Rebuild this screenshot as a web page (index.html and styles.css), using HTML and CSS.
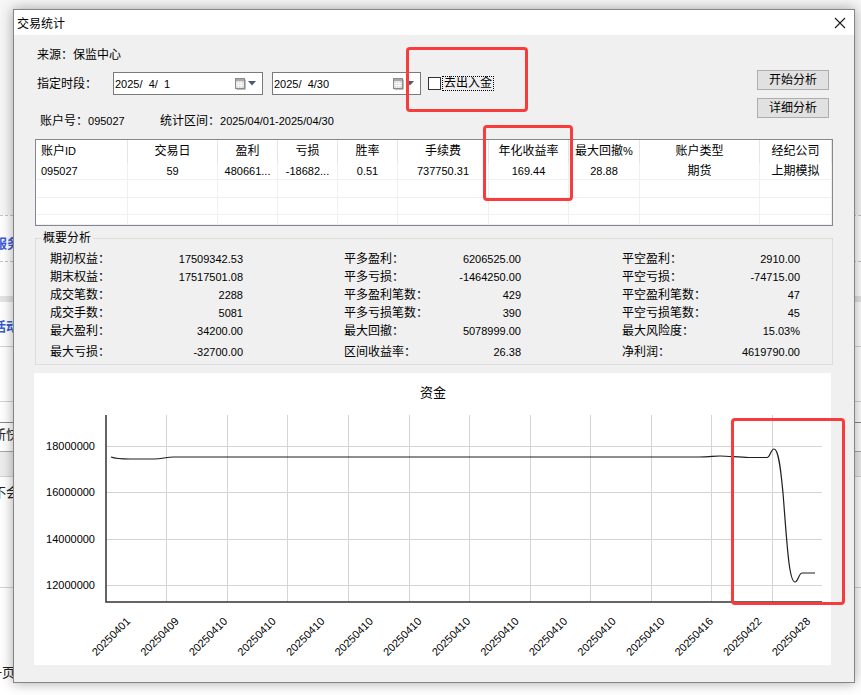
FILE: index.html
```html
<!DOCTYPE html>
<html lang="zh-CN">
<head>
<meta charset="utf-8">
<title>交易统计</title>
<link rel="stylesheet" href="styles.css">
</head>
<body>
<div class="desk">
  <div class="bgapp">
    <div class="b-top"></div>
    <div class="b-dash"></div>
    <div class="b-row b-serv"><span class="bt blue ind6">服务</span></div>
    <div class="b-dash"></div>
    <div class="b-row b-w1"></div>
    <div class="b-row b-gray"></div>
    <div class="b-row b-act"><span class="bt blue ind7">活动</span></div>
    <div class="b-line"></div>
    <div class="b-row b-w2"></div>
    <div class="b-line"></div>
    <div class="b-row b-w3"></div>
    <div class="b-line dark"></div>
    <div class="b-row b-new"><span class="bt ind7">新快</span></div>
    <div class="b-line mid"></div>
    <div class="b-row b-band"></div>
    <div class="b-line"></div>
    <div class="b-row b-meet"><span class="bt ind7">不会</span></div>
    <div class="b-line"></div>
    <div class="b-row b-last"><span class="bt ind11">一页</span></div>
  </div>

  <div class="win">
    <div class="titlebar">
      <span class="title">交易统计</span>
      <svg class="close" width="12" height="12" viewBox="0 0 12 12"><path d="M1 1 L11 11 M11 1 L1 11" stroke="#1a1a1a" stroke-width="1.1" fill="none"/></svg>
    </div>
    <div class="content">
      <div class="top">
        <div class="top-left">
          <div class="line1">来源：保监中心</div>
          <div class="line2">
            <span class="plbl">指定时段：</span>
            <div class="dp dp1"><span class="dtxt">2025/  4/  1</span>
              <svg class="cal" width="11" height="12" viewBox="0 0 11 12"><rect x="1.5" y="1.5" width="9" height="10" fill="#7d7d7d"/><rect x="0.5" y="0.5" width="9" height="10" fill="#dcdcdc" stroke="#8c8c8c"/><rect x="1" y="1" width="8" height="2" fill="#a9a9a9"/><path d="M1 5.5 H9 M1 7.5 H9 M3.5 3 V10 M6 3 V10" stroke="#ffffff" stroke-width="0.8"/></svg>
              <svg class="tri" width="8" height="5" viewBox="0 0 8 5"><polygon points="0,0 8,0 4,4.5" fill="#4f5a78"/></svg>
            </div>
            <div class="dp dp2"><span class="dtxt">2025/  4/30</span>
              <svg class="cal" width="11" height="12" viewBox="0 0 11 12"><rect x="1.5" y="1.5" width="9" height="10" fill="#7d7d7d"/><rect x="0.5" y="0.5" width="9" height="10" fill="#dcdcdc" stroke="#8c8c8c"/><rect x="1" y="1" width="8" height="2" fill="#a9a9a9"/><path d="M1 5.5 H9 M1 7.5 H9 M3.5 3 V10 M6 3 V10" stroke="#ffffff" stroke-width="0.8"/></svg>
              <svg class="tri" width="8" height="5" viewBox="0 0 8 5"><polygon points="0,0 8,0 4,4.5" fill="#4f5a78"/></svg>
            </div>
            <span class="chk"></span><span class="chklbl">去出入金</span>
          </div>
          <div class="line3"><span class="acct">账户号：<span class="n">095027</span></span><span>统计区间：<span class="n">2025/04/01-2025/04/30</span></span></div>
        </div>
        <div class="top-right">
          <div class="btn">开始分析</div>
          <div class="btn">详细分析</div>
        </div>
      </div>

      <div class="table">
        <div class="th left">账户<span class="lat">ID</span></div>
        <div class="th">交易日</div>
        <div class="th">盈利</div>
        <div class="th">亏损</div>
        <div class="th">胜率</div>
        <div class="th">手续费</div>
        <div class="th">年化收益率</div>
        <div class="th">最大回撤<span class="lat">%</span></div>
        <div class="th">账户类型</div>
        <div class="th">经纪公司</div>

        <div class="td left n">095027</div>
        <div class="td n">59</div>
        <div class="td n">480661...</div>
        <div class="td n">-18682...</div>
        <div class="td n">0.51</div>
        <div class="td n">737750.31</div>
        <div class="td n">169.44</div>
        <div class="td n">28.88</div>
        <div class="td">期货</div>
        <div class="td">上期模拟</div>

        <div class="td"></div><div class="td"></div><div class="td"></div><div class="td"></div><div class="td"></div><div class="td"></div><div class="td"></div><div class="td"></div><div class="td"></div><div class="td"></div>
        <div class="td"></div><div class="td"></div><div class="td"></div><div class="td"></div><div class="td"></div><div class="td"></div><div class="td"></div><div class="td"></div><div class="td"></div><div class="td"></div>
        <div class="td"></div><div class="td"></div><div class="td"></div><div class="td"></div><div class="td"></div><div class="td"></div><div class="td"></div><div class="td"></div><div class="td"></div><div class="td"></div>
      </div>

      <fieldset class="summary">
        <legend>概要分析</legend>
        <div class="sgrid">
          <div class="it"><span>期初权益：</span><span class="n">17509342.53</span></div>
          <div class="it"><span>平多盈利：</span><span class="n">6206525.00</span></div>
          <div class="it"><span>平空盈利：</span><span class="n">2910.00</span></div>
          <div class="it"><span>期末权益：</span><span class="n">17517501.08</span></div>
          <div class="it"><span>平多亏损：</span><span class="n">-1464250.00</span></div>
          <div class="it"><span>平空亏损：</span><span class="n">-74715.00</span></div>
          <div class="it"><span>成交笔数：</span><span class="n">2288</span></div>
          <div class="it"><span>平多盈利笔数：</span><span class="n">429</span></div>
          <div class="it"><span>平空盈利笔数：</span><span class="n">47</span></div>
          <div class="it"><span>成交手数：</span><span class="n">5081</span></div>
          <div class="it"><span>平多亏损笔数：</span><span class="n">390</span></div>
          <div class="it"><span>平空亏损笔数：</span><span class="n">45</span></div>
          <div class="it"><span>最大盈利：</span><span class="n">34200.00</span></div>
          <div class="it"><span>最大回撤：</span><span class="n">5078999.00</span></div>
          <div class="it"><span>最大风险度：</span><span class="n">15.03%</span></div>
          <div class="it"><span>最大亏损：</span><span class="n">-32700.00</span></div>
          <div class="it"><span>区间收益率：</span><span class="n">26.38</span></div>
          <div class="it"><span>净利润：</span><span class="n">4619790.00</span></div>
        </div>
      </fieldset>

      <div class="chart">
        <svg width="797" height="292" viewBox="0 0 797 292">
          <text x="399" y="24" class="ctitle" text-anchor="middle">资金</text>
          <g stroke="#d4d4d4" stroke-width="1" fill="none">
            <path d="M72 73.5 H788 M72 119.5 H788 M72 166.5 H788 M72 212.5 H788"/>
            <path d="M132.5 42 V229 M193.5 42 V229 M253.5 42 V229 M314.5 42 V229 M375.5 42 V229 M435.5 42 V229 M496.5 42 V229 M556.5 42 V229 M617.5 42 V229 M677.5 42 V229 M738.5 42 V229"/>
          </g>
          <path d="M72 42 V229 H788" stroke="#333" stroke-width="1.5" fill="none"/>
          <g class="ylab" text-anchor="end">
            <text x="61" y="77">18000000</text>
            <text x="61" y="123">16000000</text>
            <text x="61" y="170">14000000</text>
            <text x="61" y="216">12000000</text>
          </g>
          <path d="M77 84 C82 86 88 86 96 86 L120 86 C128 86 132 84 140 84 L665 84 C675 84 680 83 686 83 C695 83 705 84.5 715 84.5 L733 84.5 C736 84.5 737 76 740 76 C745 76 747 100 749 120 C751 145 753 175 755 190 C757 205 759 209 761 209 C764 209 765 200 768 200 L781 200" stroke="#1e1e1e" stroke-width="1.2" fill="none"/>
          <g class="xlab" text-anchor="end">
            <text transform="translate(97 249) rotate(-45)">20250401</text>
            <text transform="translate(145.6 249) rotate(-45)">20250409</text>
            <text transform="translate(194.1 249) rotate(-45)">20250410</text>
            <text transform="translate(242.7 249) rotate(-45)">20250410</text>
            <text transform="translate(291.3 249) rotate(-45)">20250410</text>
            <text transform="translate(339.9 249) rotate(-45)">20250410</text>
            <text transform="translate(388.4 249) rotate(-45)">20250410</text>
            <text transform="translate(437 249) rotate(-45)">20250410</text>
            <text transform="translate(485.6 249) rotate(-45)">20250410</text>
            <text transform="translate(534.1 249) rotate(-45)">20250410</text>
            <text transform="translate(582.7 249) rotate(-45)">20250410</text>
            <text transform="translate(631.3 249) rotate(-45)">20250410</text>
            <text transform="translate(679.9 249) rotate(-45)">20250416</text>
            <text transform="translate(728.4 249) rotate(-45)">20250422</text>
            <text transform="translate(777 249) rotate(-45)">20250428</text>
          </g>
        </svg>
      </div>
    </div>
  </div>

  <div class="mark m1"></div>
  <div class="mark m2"></div>
  <div class="mark m3"></div>
</div>
</body>
</html>
```

FILE: styles.css
```css
* { box-sizing: border-box; }
html, body { margin: 0; padding: 0; }
body {
  font-family: "Liberation Sans", "Noto Sans CJK SC", sans-serif;
  font-size: 12px;
  color: #000;
  background: #f4f4f4;
}
.desk {
  position: relative;
  width: 861px;
  height: 695px;
  overflow: hidden;
}

/* background application behind the dialog */
.bgapp {
  display: flex;
  flex-direction: column;
  width: 861px;
  height: 695px;
  background: #ffffff;
}
.b-top { height: 215px; background: #f6f6f6; flex: none; }
.b-dash { height: 1px; border-top: 1px dashed #c4c4c4; flex: none; }
.b-line { height: 1px; background: #d4d4d4; flex: none; }
.b-line.dark { background: #8a8a8a; }
.b-line.mid { background: #a8a8a8; }
.b-row { flex: none; background: #fff; overflow: hidden; }
.bt {
  display: block;
  font-family: "Noto Sans CJK SC", sans-serif;
  font-size: 13px;
  line-height: 14px;
  color: #222;
  white-space: nowrap;
}
.bt.blue { color: #3b5bd5; font-weight: bold; }
.ind6 { text-indent: -6px; }
.ind7 { text-indent: -7px; }
.ind11 { text-indent: -11px; }
.b-serv { height: 45px; padding-top: 20px; }
.b-w1 { height: 34px; }
.b-gray { height: 6px; background: #e4e4e4; }
.b-act { height: 44px; padding-top: 17px; }
.b-w2 { height: 54px; }
.b-w3 { height: 20px; }
.b-new { height: 28px; padding-top: 4px; }
.b-band { height: 24px; background: #ededed; }
.b-meet { height: 110px; padding-top: 8px; }
.b-last { height: 107px; padding-top: 77px; }

/* dialog window */
.win {
  position: absolute;
  left: 13px;
  top: 9px;
  width: 842px;
  height: 674px;
  border: 1px solid #858585;
  background: #f0f0f0;
  box-shadow: 0 0 12px rgba(0, 0, 0, 0.35);
  overflow: hidden;
}
.titlebar {
  height: 25px;
  background: #fff;
  display: flex;
  align-items: center;
  justify-content: space-between;
  padding: 0 8px 0 3px;
}
.title {
  font-family: "Noto Sans CJK SC", sans-serif;
  font-size: 12px;
  line-height: 14px;
  padding-top: 1px;
}
.close { display: block; margin-top: 1px; }

.content {
  padding: 0 20px;
}
.top {
  display: flex;
  align-items: flex-start;
}
.top-left {
  padding-top: 12px;
  padding-left: 3px;
}
.line1 { height: 16px; line-height: 16px; }
.line2 {
  margin-top: 9px;
  height: 23px;
  display: flex;
  align-items: center;
}
.plbl { width: 76px; flex: none; line-height: 16px; }
.dp {
  height: 23px;
  border: 1px solid #7a7a7a;
  background: #fff;
  display: flex;
  align-items: center;
  padding: 0 6px 0 1px;
  flex: none;
}
.dp1 { width: 150px; }
.dp2 { width: 149px; margin-left: 9px; }
.dtxt {
  white-space: pre;
  font-size: 11px;
  flex: 1;
  padding-top: 1px;
}
.cal { display: block; margin-right: 2px; }
.tri { display: block; }
.chk {
  width: 13px;
  height: 13px;
  border: 1px solid #333;
  background: #fff;
  margin-left: 7px;
  flex: none;
}
.chklbl {
  margin-left: 1px;
  border: 1px dotted #000;
  padding: 0 1px;
  line-height: 13px;
}
.line3 {
  margin-top: 18px;
  height: 16px;
  line-height: 16px;
  padding-left: 3px;
  display: flex;
}
.acct { width: 120px; flex: none; }
.n { font-size: 11px; }
.lat { font-size: 11px; }

.top-right {
  margin-left: auto;
  margin-right: 5px;
  margin-top: 35px;
  display: flex;
  flex-direction: column;
  gap: 8px;
}
.btn {
  width: 72px;
  height: 20px;
  border: 1px solid #adadad;
  background: #e1e1e1;
  text-align: center;
  line-height: 18px;
}

/* table */
.table {
  margin-top: 10px;
  margin-left: 1px;
  width: 798px;
  height: 87px;
  border: 1px solid #828790;
  background: #fff;
  display: grid;
  grid-template-columns: 92px 90px 60px 60px 60px 91px 80px 71px 120px 72px;
  grid-template-rows: 23px 17px 18px 17px 10px;
  overflow: hidden;
}
.th {
  border-right: 1px solid #e5e5e5;
  text-align: center;
  line-height: 23px;
  white-space: nowrap;
}
.td {
  border-right: 1px solid #f0f0f0;
  border-bottom: 1px solid #f0f0f0;
  text-align: center;
  line-height: 16px;
  white-space: nowrap;
  overflow: hidden;
}
.th.left, .td.left { text-align: left; padding-left: 5px; }

/* summary group */
.summary {
  margin: 5px 0 0 1px;
  padding: 5px 0 0 14px;
  width: 798px;
  min-width: 0;
  border: 1px solid #dcdcdc;
}
.summary legend {
  padding: 0 2px;
  margin-left: -9px;
  line-height: 14px;
  font-size: 12px;
}
.sgrid {
  display: grid;
  grid-template-columns: 193px 177px 178px;
  grid-template-rows: repeat(5, 18px) 24px;
  column-gap: 101px;
  align-items: center;
}
.it {
  display: flex;
  justify-content: space-between;
  line-height: 16px;
}

/* chart */
.chart {
  margin-top: 8px;
  width: 797px;
  height: 292px;
  background: #fff;
}
.chart svg { display: block; }
.ctitle {
  font-family: "Noto Sans CJK SC", sans-serif;
  font-size: 13px;
  fill: #000;
}
.ylab text, .xlab text {
  font-family: "Liberation Sans", sans-serif;
  font-size: 11px;
  fill: #000;
}

/* red annotation boxes drawn over the screenshot */
.mark {
  position: absolute;
  border: 3px solid #f83c3c;
  border-radius: 4px;
}
.m1 { left: 406px; top: 47px; width: 122px; height: 65px; }
.m2 { left: 483px; top: 125px; width: 90px; height: 76px; }
.m3 { left: 731px; top: 418px; width: 114px; height: 187px; }
```
